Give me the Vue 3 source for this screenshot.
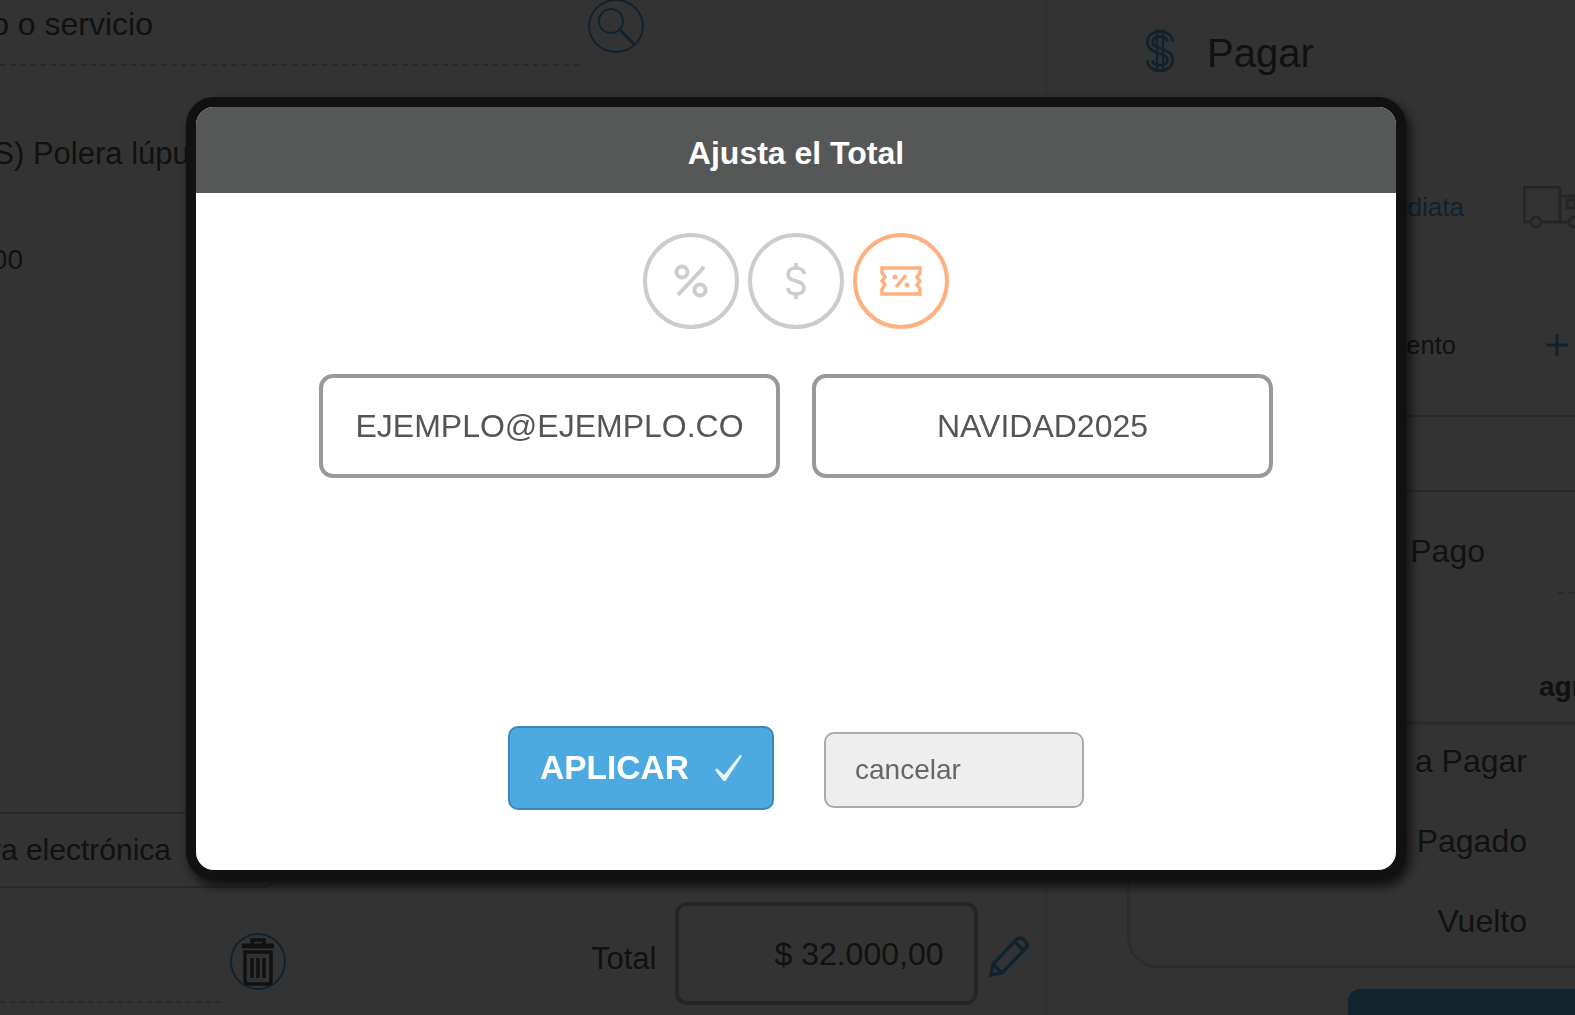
<template>
  <div class="page">
    <main class="col-left">
      <div class="search-row">
        <div class="search-field"><span>Buscar producto o servicio</span></div>
        <div class="round-icon search-icon">
          <svg width="44" height="44" viewBox="0 0 44 44" fill="none" stroke="#4daae0" stroke-width="2">
            <circle cx="17" cy="17" r="12" />
            <path d="M26 26l14 14" stroke-width="3" />
          </svg>
        </div>
      </div>

      <p class="item-name">(S) Polera lúpulo</p>
      <div class="item-price"><span>$ 32.000,00</span></div>

      <div class="doc-select"><span>Factura electrónica</span></div>

      <div class="total-row">
        <div class="note-field"></div>
        <div class="round-icon trash-icon">
          <svg width="34" height="48" viewBox="0 0 34 48" fill="none" stroke="#555" stroke-width="3.5">
            <path d="M11 6V2h12v4" />
            <path d="M1 8h32" stroke-width="5" />
            <path d="M4 14h26v29q0 3-3 3H7q-3 0-3-3z" />
            <path d="M11 20v20M17 20v20M23 20v20" />
          </svg>
        </div>
        <span class="total-label">Total</span>
        <div class="total-box">$ 32.000,00</div>
        <svg class="pencil" width="41" height="41" viewBox="0 0 41 41" fill="none" stroke="#4daae0" stroke-width="3.5">
          <path d="M2 39l2-11L28 3q3-2 6 0l3 3q2 3 0 6L13 37z" />
          <path d="M4 28l9 9M26 6l9 9" />
        </svg>
      </div>
    </main>

    <aside class="col-right">
      <header class="pay-head">
        <svg width="28" height="45" viewBox="0 0 28 45" fill="none">
          <path d="M24 14c0-5-4-8-10-8S4 9 4 14c0 5 4 7 10 9s10 4 10 9c0 5-4 8-10 8S4 37 4 32" stroke="#4daae0" stroke-width="8" />
          <path d="M24 14c0-5-4-8-10-8S4 9 4 14c0 5 4 7 10 9s10 4 10 9c0 5-4 8-10 8S4 37 4 32" stroke="#fff" stroke-width="2.5" />
          <path d="M11 1v43M17 1v43" stroke="#4daae0" stroke-width="2.5" />
        </svg>
        <span>Pagar</span>
      </header>

      <div class="delivery-row">
        <span class="delivery-text">Entrega inmediata</span>
        <svg class="truck" width="70" height="42" viewBox="0 0 70 42" fill="none" stroke="#bbb" stroke-width="3">
          <path d="M8 36H3q-2 0-2-2V4q0-3 3-3h30q3 0 3 3v32H18" />
          <path d="M37 10h14l9 12v14h-4M46 36h-9" />
          <circle cx="13" cy="36" r="5" />
          <circle cx="51" cy="36" r="5" />
          <rect x="44" y="14" width="8" height="8" />
        </svg>
      </div>

      <div class="discount-row">
        <span class="discount-text">Agregar Descuento</span>
        <svg class="plus" width="22" height="22" viewBox="0 0 22 22" fill="none" stroke="#4daae0" stroke-width="3">
          <path d="M11 0v22M0 11h22" />
        </svg>
      </div>

      <div class="blank-row"></div>

      <div class="pago-row">
        <span class="pago-label">Medio de Pago</span>
        <div class="pago-field"></div>
      </div>

      <div class="add-row"><strong>agregar</strong></div>

      <div class="totals">
        <div v-for="row in totales" :key="row" class="totals-line">{{ row }}</div>
      </div>

      <div class="pay-button"></div>
    </aside>

    <div class="overlay">
      <section class="modal">
        <h2 class="modal-title">Ajusta el Total</h2>
        <div class="modal-body">
          <div class="modes">
            <button class="mode">
              <svg width="34" height="34" viewBox="0 0 34 34" fill="none" stroke="#ccc" stroke-width="4">
                <circle cx="8" cy="8" r="5.5" />
                <circle cx="26" cy="26" r="5.5" />
                <path d="M30 3L4 31" />
              </svg>
            </button>
            <button class="mode">
              <svg width="20" height="36" viewBox="0 0 20 36" fill="none" stroke="#ccc" stroke-width="3.5">
                <path d="M18 11c0-4-3.500-6-8-6s-8 2.500-8 6.500 3.500 5.500 8 6.500 8 3 8 7-3.500 6-8 6-8-2-8-6" />
                <path d="M10 0v5M10 31v5" />
              </svg>
            </button>
            <button class="mode selected">
              <svg width="42" height="30" viewBox="0 0 42 30" fill="none" stroke="#ffb080" stroke-width="3.5">
                <path d="M2 2h38v5l-3 4 3 4-3 4 3 4v5H2v-5l3-4-3-4 3-4-3-4z" />
                <path d="M26 9L16 21" />
                <circle cx="15" cy="11" r="2.5" fill="#ffb080" stroke="none" />
                <circle cx="27" cy="19" r="2.500" fill="#ffb080" stroke="none" />
              </svg>
            </button>
          </div>

          <div class="fields">
            <input class="field" type="text" value="EJEMPLO@EJEMPLO.CO" readonly>
            <input class="field" type="text" value="NAVIDAD2025" readonly>
          </div>

          <div class="actions">
            <button class="apply">
              APLICAR
              <svg width="27" height="26" viewBox="0 0 27 26" fill="#fff" opacity="0.9">
                <path d="M0 15l2-1.500 7 6.500L25 0l2 1-16.500 25h-2z" />
              </svg>
            </button>
            <button class="cancel">cancelar</button>
          </div>
        </div>
      </section>
    </div>
  </div>
</template>

<script setup>
const totales = ['Total a Pagar', 'Total Pagado', 'Vuelto'];
</script>

<style>
html, body { margin: 0; background: #fff; }
</style>

<style scoped>
.page { width: 1575px; height: 1015px; display: flex; overflow: hidden; font-family: "Liberation Sans", Arial, sans-serif; color: #555; background: #fff; }

.col-left { width: 1043px; height: 1015px; flex: none; border-right: 5px solid #f4f4f4; display: flex; flex-direction: column; }
.search-row { display: flex; align-items: flex-start; height: 68px; flex: none; }
.search-field { width: 579px; height: 66px; border-bottom: 2px dashed #ccc; display: flex; font-size: 32px; line-height: 48px; justify-content: flex-end; padding-right: 426px; box-sizing: border-box; white-space: nowrap; }
.round-icon { border: 2px solid #4daae0; border-radius: 50%; box-sizing: border-box; display: flex; align-items: center; justify-content: center; }
.search-icon { width: 56px; height: 54px; margin: -1px 0 0 9px; }
.item-name { margin: 62px 0 0 -17px; font-size: 31px; line-height: 48px; white-space: nowrap; }
.item-price { width: 23px; margin-top: 62px; display: flex; justify-content: flex-end; font-size: 28px; line-height: 40px; white-space: nowrap; }
.doc-select { width: 274px; height: 76px; margin-top: 532px; box-sizing: border-box; border: 2px solid #ccc; border-left: none; border-radius: 0 10px 10px 0; padding-right: 101px; display: flex; align-items: center; justify-content: flex-end; font-size: 30px; white-space: nowrap; }
.total-row { margin-top: 14px; display: flex; align-items: flex-start; }
.note-field { width: 221px; height: 101px; box-sizing: border-box; border-bottom: 2px dashed #ccc; }
.trash-icon { width: 56px; height: 57px; margin: 31px 0 0 9px; }
.total-label { margin: 37px 19px 0 305px; font-size: 31px; line-height: 40px; }
.total-box { width: 303px; height: 103px; box-sizing: border-box; border: 4px solid #bbb; border-radius: 12px; padding: 2px 31px 0 0; display: flex; align-items: center; justify-content: flex-end; font-size: 32px; }
.pencil { margin: 34px 0 0 11px; }

.col-right { flex: 1; height: 1015px; overflow: hidden; display: flex; flex-direction: column; }
.pay-head { height: 100px; flex: none; padding-left: 98px; box-sizing: border-box; display: flex; align-items: center; gap: 33px; font-size: 40px; }
.pay-head span { padding-top: 6px; }
.delivery-row { height: 60px; margin-top: 77px; flex: none; display: flex; align-items: center; }
.delivery-text { width: 416px; flex: none; text-align: right; font-size: 26px; color: #4daae0; white-space: nowrap; }
.truck { margin-left: 59px; flex: none; }
.discount-row { height: 60px; margin-top: 78px; padding-bottom: 40px; flex: none; display: flex; align-items: center; border-bottom: 2px solid #ccc; box-sizing: content-box; }
.discount-text { width: 408px; flex: none; text-align: right; font-size: 25.5px; white-space: nowrap; }
.plus { margin-left: 90px; flex: none; }
.blank-row { height: 73px; flex: none; border-bottom: 2px solid #ccc; }
.pago-row { height: 102px; flex: none; display: flex; }
.pago-label { width: 437px; flex: none; margin-top: 34px; text-align: right; font-size: 32px; line-height: 50px; white-space: nowrap; }
.pago-field { flex: 1; margin-left: 73px; border-bottom: 2px dashed #ccc; }
.add-row { height: 131px; flex: none; box-sizing: border-box; padding: 73px 0 0 491px; border-bottom: 4px solid #ddd; font-size: 28px; line-height: 40px; white-space: nowrap; }
.totals { margin-left: 79px; width: 600px; flex: none; box-sizing: border-box; border: 3px solid #ddd; border-top: none; border-right: none; border-bottom-left-radius: 30px; padding: 1px 0 9px; display: flex; flex-direction: column; gap: 10px; }
.totals-line { width: 397px; height: 70px; line-height: 70px; text-align: right; font-size: 32px; white-space: nowrap; }
.pay-button { margin: 21px 0 0 300px; height: 100px; flex: none; background: #5ab4e6; border-radius: 12px 0 0 12px; }

.overlay { position: fixed; inset: 0; background: rgba(0, 0, 0, 0.8); padding: 97px 0 0 186px; box-sizing: border-box; }
.modal { width: 1220px; height: 783px; box-sizing: border-box; border: 10px solid #111; border-radius: 28px; overflow: hidden; background: #fff; display: flex; flex-direction: column; box-shadow: 4px 6px 12px rgba(0, 0, 0, 0.75); }
.modal-title { margin: 0; height: 86px; padding-top: 7px; box-sizing: border-box; flex: none; background: #565857; color: #fff; display: flex; align-items: center; justify-content: center; font-size: 32px; font-weight: bold; }
.modal-body { flex: 1; display: flex; flex-direction: column; align-items: center; padding: 40px 0 60px; box-sizing: border-box; }
.modes { display: flex; gap: 9px; }
.mode { width: 96px; height: 96px; padding: 0; border: 4px solid #ccc; border-radius: 50%; background: #fff; display: flex; align-items: center; justify-content: center; }
.mode.selected { border-color: #ffb080; }
.fields { display: flex; gap: 32px; margin-top: 45px; }
.field { width: 461px; height: 104px; box-sizing: border-box; border: 4px solid #999; border-radius: 14px; outline: none; padding: 1px 0 0; text-align: center; font-family: inherit; font-size: 32px; color: #555; background: #fff; }
.actions { margin-top: auto; display: flex; align-items: flex-start; gap: 50px; }
.apply { width: 266px; height: 84px; box-sizing: border-box; border: 2px solid #3a87bb; border-radius: 10px; background: #4daae0; color: #fff; font-family: inherit; font-size: 33.5px; font-weight: bold; display: flex; align-items: center; gap: 26px; padding: 0 0 0 30px; }
.cancel { width: 260px; height: 76px; margin-top: 6px; box-sizing: border-box; border: 2px solid #aaa; border-radius: 10px; background: #eee; color: #666; font-family: inherit; font-size: 28px; text-align: left; padding: 0 0 0 29px; }
</style>
